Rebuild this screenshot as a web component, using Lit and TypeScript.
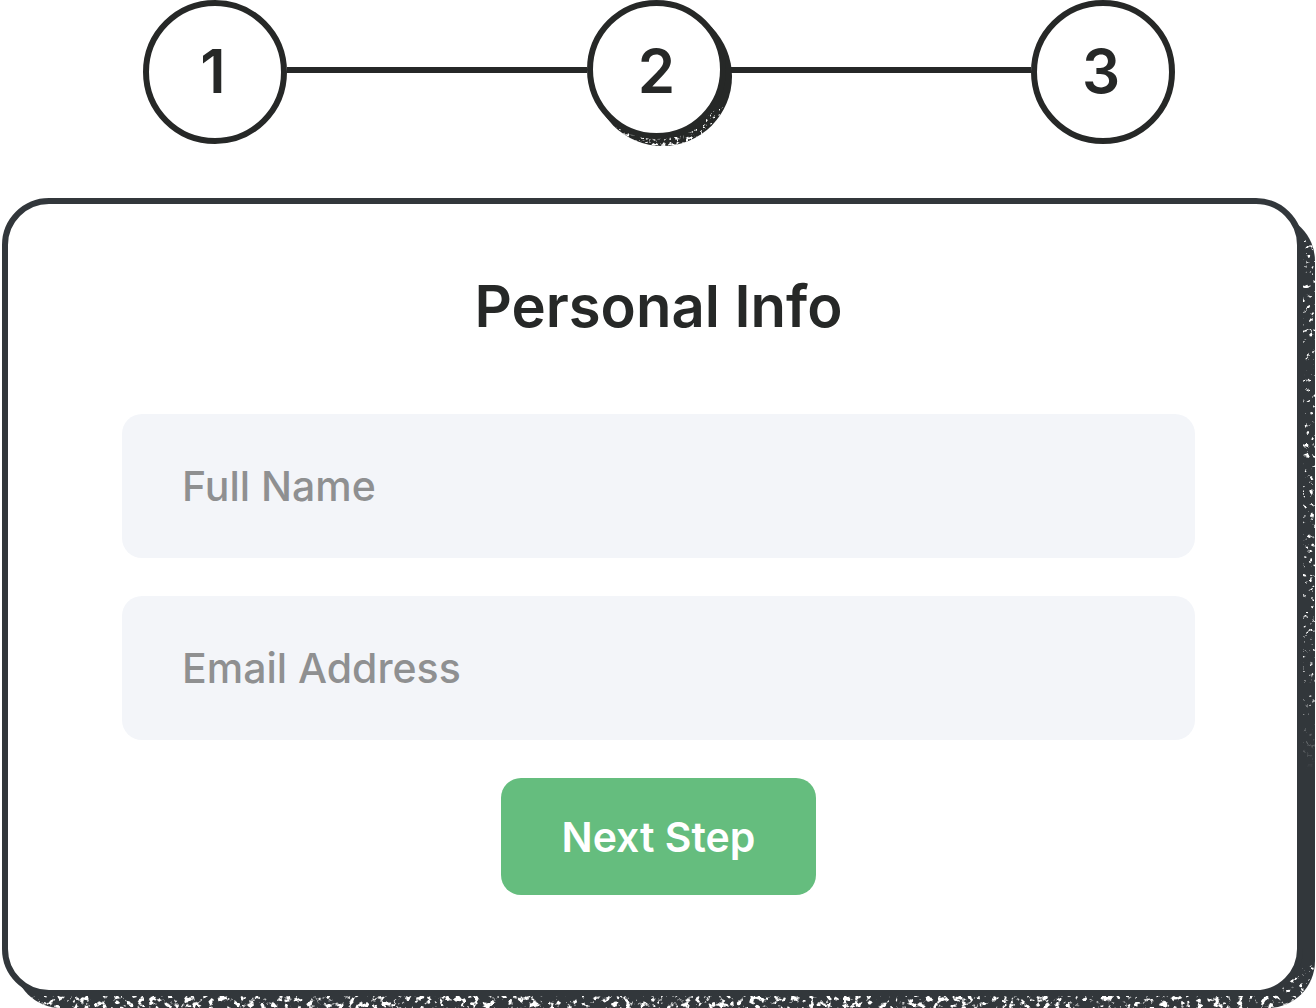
import { LitElement, html, css } from "lit";
import { customElement, property, state } from "lit/decorators.js";

@customElement("step-track")
export class StepTrack extends LitElement {
  @property({ type: Number }) current = 2;

  static styles = css`
    :host {
      display: block;
    }
    .track {
      display: flex;
      align-items: flex-start;
      list-style: none;
      margin: 0;
      padding: 0 141px 0 143px;
    }
    .line {
      flex: 1;
      height: 6px;
      margin-top: 67px;
      background: #262827;
    }
    .step {
      position: relative;
      flex: none;
      width: 144px;
      height: 144px;
    }
    .disc {
      position: relative;
      box-sizing: border-box;
      display: flex;
      align-items: flex-start;
      justify-content: center;
      width: 144px;
      height: 144px;
      padding: 35px 4px 0 0;
      border: 6px solid #262827;
      border-radius: 50%;
      background: #fff;
      color: #262827;
      font: 600 60px/60px Inter, "Liberation Sans", sans-serif;
    }
    .current .disc {
      width: 139px;
      height: 139px;
      padding-right: 0;
    }
    .shade {
      position: absolute;
      top: 7px;
      left: 6px;
      width: 139px;
      height: 139px;
      border-radius: 50%;
      overflow: hidden;
      background: #262827;
    }
    .grain {
      display: block;
      width: 100%;
      height: 100%;
    }
  `;

  private renderStep(n: number) {
    const active = n === this.current;
    return html`<li class="step ${active ? "current" : ""}" aria-current=${active ? "step" : "false"}>
      ${active
        ? html`<div class="shade">
            <svg class="grain" viewBox="0 0 139 139" aria-hidden="true">
              <filter id="dense" x="0" y="0" width="1" height="1" color-interpolation-filters="sRGB">
                <feTurbulence type="fractalNoise" baseFrequency="0.3" numOctaves="2" seed="8" />
                <feColorMatrix values="0 0 0 0 1  0 0 0 0 1  0 0 0 0 1  7 0 0 0 -3.7" />
                <feComposite in2="SourceGraphic" operator="in" />
              </filter>
              <filter id="sparse" x="0" y="0" width="1" height="1" color-interpolation-filters="sRGB">
                <feTurbulence type="fractalNoise" baseFrequency="0.4" numOctaves="2" seed="3" />
                <feColorMatrix values="0 0 0 0 1  0 0 0 0 1  0 0 0 0 1  7 0 0 0 -4.3" />
                <feComposite in2="SourceGraphic" operator="in" />
              </filter>
              <path filter="url(#dense)" fill="#fff" d="M20 119 Q58 136 92 128 L100 124 L104 139 H20Z" />
              <path filter="url(#sparse)" fill="#fff" d="M92 128 Q112 116 118 102 L132 100 L122 122 L98 139Z" />
            </svg>
          </div>`
        : ""}
      <span class="disc">${n}</span>
    </li>`;
  }

  render() {
    return html`<ol class="track">
      ${this.renderStep(1)}
      <li class="line" role="presentation"></li>
      ${this.renderStep(2)}
      <li class="line" role="presentation"></li>
      ${this.renderStep(3)}
    </ol>`;
  }
}

@customElement("grain-card")
export class GrainCard extends LitElement {
  static styles = css`
    :host {
      display: block;
      position: relative;
    }
    .shade {
      position: absolute;
      inset: 16px -12px -12px 12px;
      border-radius: 47px;
      overflow: hidden;
      background: #32373b;
    }
    .grain {
      display: block;
      width: 100%;
      height: 100%;
    }
    .face {
      position: relative;
      border: 6px solid #32373b;
      border-radius: 47px;
      background: #fff;
      padding: 67px 102px 95px 114px;
    }
  `;

  render() {
    return html`
      <div class="shade">
        <svg class="grain" aria-hidden="true">
          <filter id="dense" x="0" y="0" width="1" height="1" color-interpolation-filters="sRGB">
            <feTurbulence type="fractalNoise" baseFrequency="0.17" numOctaves="3" seed="5" />
            <feColorMatrix values="0 0 0 0 1  0 0 0 0 1  0 0 0 0 1  8 0 0 0 -4.3" />
            <feComposite in2="SourceGraphic" operator="in" />
          </filter>
          <filter id="sparse" x="0" y="0" width="1" height="1" color-interpolation-filters="sRGB">
            <feTurbulence type="fractalNoise" baseFrequency="0.2" numOctaves="3" seed="11" />
            <feColorMatrix values="0 0 0 0 1  0 0 0 0 1  0 0 0 0 1  8 0 0 0 -5" />
            <feComposite in2="SourceGraphic" operator="in" />
          </filter>
          <linearGradient id="fade" x1="0" y1="0" x2="0" y2="1">
            <stop offset="0.8" stop-color="#fff" />
            <stop offset="1" stop-color="#fff" stop-opacity="0" />
          </linearGradient>
          <svg x="100%" overflow="visible" width="12" height="100%">
            <rect x="-12" y="0" width="12" height="70%" fill="url(#fade)" filter="url(#sparse)" />
          </svg>
          <svg y="100%" overflow="visible" width="100%" height="12">
            <rect x="0" y="-12" width="100%" height="12" fill="#fff" filter="url(#dense)" />
          </svg>
          <svg x="100%" y="100%" overflow="visible" width="12" height="12">
            <path d="M-40 -12 L-10 -46 H0 V-12Z" fill="#fff" filter="url(#sparse)" />
          </svg>
        </svg>
      </div>
      <div class="face"><slot></slot></div>
    `;
  }
}

@customElement("app-root")
export class AppRoot extends LitElement {
  @state() private step = 2;

  static styles = css`
    :host {
      display: block;
      background: #fff;
      font-family: Inter, "Liberation Sans", sans-serif;
    }
    .card {
      margin: 54px 13px 12px 2px;
    }
    .form {
      display: flex;
      flex-direction: column;
      gap: 38px;
    }
    .title {
      margin: 0 0 35px;
      text-align: center;
      color: #262827;
      font-size: 58px;
      line-height: 70px;
      font-weight: 600;
    }
    .field {
      box-sizing: border-box;
      width: 100%;
      height: 144px;
      padding: 0 60px;
      border: 0;
      border-radius: 20px;
      background: #f3f5f9;
      color: #262827;
      font: 500 41px/50px Inter, "Liberation Sans", sans-serif;
    }
    .field::placeholder {
      color: #8f9091;
      opacity: 1;
    }
    .next {
      align-self: center;
      height: 117px;
      padding: 0 61px;
      border: 0;
      border-radius: 20px;
      background: #65bd7e;
      color: #fff;
      font: 600 41px/50px Inter, "Liberation Sans", sans-serif;
      cursor: pointer;
    }
  `;

  render() {
    return html`
      <step-track .current=${this.step}></step-track>
      <grain-card class="card">
        <form class="form" @submit=${(e: Event) => e.preventDefault()}>
          <h1 class="title">Personal Info</h1>
          <input class="field" type="text" name="name" aria-label="Full Name" placeholder="Full Name" />
          <input class="field" type="email" name="email" aria-label="Email Address" placeholder="Email Address" />
          <button class="next" type="submit">Next Step</button>
        </form>
      </grain-card>
    `;
  }
}
